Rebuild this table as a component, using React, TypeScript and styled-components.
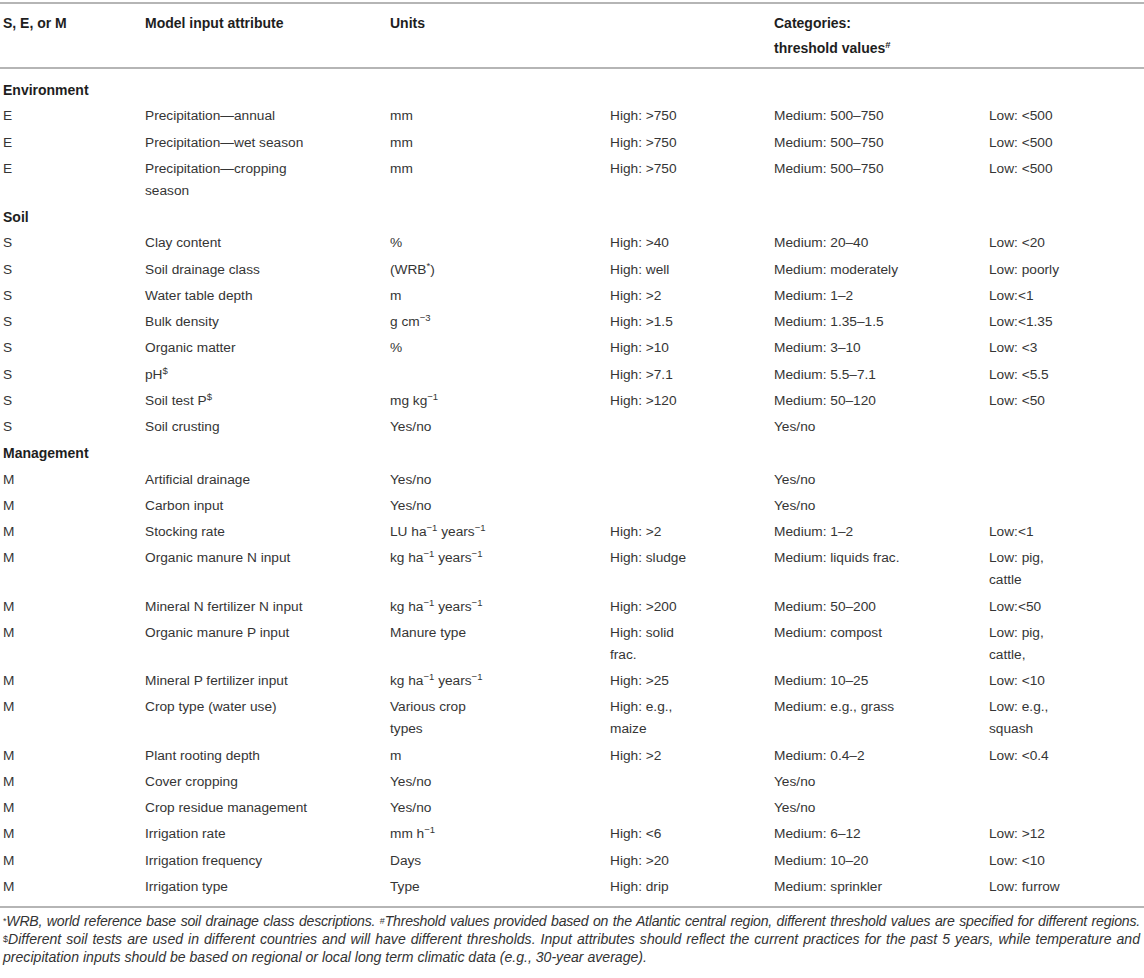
import React from 'react';
import styled, { createGlobalStyle } from 'styled-components';

const GlobalStyle = createGlobalStyle`
  html, body {
    margin: 0;
    padding: 0;
    background: #ffffff;
  }
  body {
    font-family: 'Liberation Sans', Arial, Helvetica, sans-serif;
    color: #333333;
  }
`;

const Page = styled.div`
  width: 1144px;
  padding-top: 2px;
`;

const Table = styled.table`
  width: 1144px;
  border-collapse: collapse;
  table-layout: fixed;
  border-top: 2px solid #b5b5b5;
  font-size: 13.7px;
`;

const HeadRow = styled.tr`
  border-bottom: 2px solid #b5b5b5;
`;

const HeadCell = styled.th<{ $pr: number }>`
  text-align: left;
  vertical-align: top;
  font-weight: 700;
  font-size: 14px;
  color: #1e1e1e;
  line-height: 25px;
  padding: 7px ${p => p.$pr}px 6px 3px;
`;

const Row = styled.tr`
  &:first-child td {
    padding-top: 10px;
  }
  &:last-child td {
    padding-bottom: 8px;
  }
`;

const Cell = styled.td<{ $pr: number }>`
  vertical-align: top;
  line-height: 22px;
  padding: 2px ${p => p.$pr}px 2.26px 3px;
  color: #353535;
`;

const SectionCell = styled.td`
  font-weight: 700;
  font-size: 14px;
  color: #1e1e1e;
  line-height: 22px;
  padding: 2px 0 2.26px 3px;
`;

const Sup = styled.sup`
  font-size: 9.5px;
  line-height: 0;
  vertical-align: 5px;
`;

const Notes = styled.div`
  border-top: 2px solid #b5b5b5;
  padding: 4px 4px 0 3px;
  font-style: italic;
  font-size: 14.1px;
  line-height: 18px;
  color: #333333;
`;

// the printed footnotes are justified line by line, as in the source layout
const NoteLine = styled.p<{ $stretch?: boolean; $tight?: boolean }>`
  margin: 0;
  text-align: justify;
  text-align-last: ${p => (p.$stretch ? 'justify' : 'auto')};
  letter-spacing: ${p => (p.$tight ? '-0.22px' : '0')};
  white-space: nowrap;
`;

const NoteMark = styled.sup`
  font-size: 9px;
  line-height: 0;
  vertical-align: 2px;
  font-style: normal;
`;

// column widths and right padding (the original keeps each column narrow)
const cols = [
  { w: 142, pr: 4 },
  { w: 245, pr: 62 },
  { w: 220, pr: 112 },
  { w: 164, pr: 74 },
  { w: 215, pr: 20 },
  { w: 158, pr: 72 },
];

type Cells = [React.ReactNode, React.ReactNode, React.ReactNode, React.ReactNode, React.ReactNode, React.ReactNode];
type Line = { section: string } | { cells: Cells };

const minus = '\u22121';

const lines: Line[] = [
  { section: 'Environment' },
  { cells: ['E', 'Precipitation\u2014annual', 'mm', 'High: >750', 'Medium: 500\u2013750', 'Low: <500'] },
  { cells: ['E', 'Precipitation\u2014wet season', 'mm', 'High: >750', 'Medium: 500\u2013750', 'Low: <500'] },
  { cells: ['E', 'Precipitation\u2014cropping season', 'mm', 'High: >750', 'Medium: 500\u2013750', 'Low: <500'] },
  { section: 'Soil' },
  { cells: ['S', 'Clay content', '%', 'High: >40', 'Medium: 20\u201340', 'Low: <20'] },
  { cells: ['S', 'Soil drainage class', <>(WRB<Sup>*</Sup>)</>, 'High: well', 'Medium: moderately', 'Low: poorly'] },
  { cells: ['S', 'Water table depth', 'm', 'High: >2', 'Medium: 1\u20132', 'Low:<1'] },
  { cells: ['S', 'Bulk density', <>g cm<Sup>{'\u22123'}</Sup></>, 'High: >1.5', 'Medium: 1.35\u20131.5', 'Low:<1.35'] },
  { cells: ['S', 'Organic matter', '%', 'High: >10', 'Medium: 3\u201310', 'Low: <3'] },
  { cells: ['S', <>pH<Sup>$</Sup></>, '', 'High: >7.1', 'Medium: 5.5\u20137.1', 'Low: <5.5'] },
  { cells: ['S', <>Soil test P<Sup>$</Sup></>, <>mg kg<Sup>{minus}</Sup></>, 'High: >120', 'Medium: 50\u2013120', 'Low: <50'] },
  { cells: ['S', 'Soil crusting', 'Yes/no', '', 'Yes/no', ''] },
  { section: 'Management' },
  { cells: ['M', 'Artificial drainage', 'Yes/no', '', 'Yes/no', ''] },
  { cells: ['M', 'Carbon input', 'Yes/no', '', 'Yes/no', ''] },
  { cells: ['M', 'Stocking rate', <>LU ha<Sup>{minus}</Sup> years<Sup>{minus}</Sup></>, 'High: >2', 'Medium: 1\u20132', 'Low:<1'] },
  { cells: ['M', 'Organic manure N input', <>kg ha<Sup>{minus}</Sup> years<Sup>{minus}</Sup></>, 'High: sludge', 'Medium: liquids frac.', 'Low: pig, cattle'] },
  { cells: ['M', 'Mineral N fertilizer N input', <>kg ha<Sup>{minus}</Sup> years<Sup>{minus}</Sup></>, 'High: >200', 'Medium: 50\u2013200', 'Low:<50'] },
  { cells: ['M', 'Organic manure P input', 'Manure type', 'High: solid frac.', 'Medium: compost', 'Low: pig, cattle,'] },
  { cells: ['M', 'Mineral P fertilizer input', <>kg ha<Sup>{minus}</Sup> years<Sup>{minus}</Sup></>, 'High: >25', 'Medium: 10\u201325', 'Low: <10'] },
  { cells: ['M', 'Crop type (water use)', 'Various crop types', 'High: e.g., maize', 'Medium: e.g., grass', 'Low: e.g., squash'] },
  { cells: ['M', 'Plant rooting depth', 'm', 'High: >2', 'Medium: 0.4\u20132', 'Low: <0.4'] },
  { cells: ['M', 'Cover cropping', 'Yes/no', '', 'Yes/no', ''] },
  { cells: ['M', 'Crop residue management', 'Yes/no', '', 'Yes/no', ''] },
  { cells: ['M', 'Irrigation rate', <>mm h<Sup>{minus}</Sup></>, 'High: <6', 'Medium: 6\u201312', 'Low: >12'] },
  { cells: ['M', 'Irrigation frequency', 'Days', 'High: >20', 'Medium: 10\u201320', 'Low: <10'] },
  { cells: ['M', 'Irrigation type', 'Type', 'High: drip', 'Medium: sprinkler', 'Low: furrow'] },
];

const headers: React.ReactNode[] = [
  'S, E, or M',
  'Model input attribute',
  'Units',
  '',
  <>Categories:<br />threshold values<Sup>#</Sup></>,
  '',
];

const App: React.FC = () => {
  return (
    <Page>
      <GlobalStyle />
      <Table>
        <colgroup>
          {cols.map((c, i) => (
            <col key={i} style={{ width: c.w }} />
          ))}
        </colgroup>
        <thead>
          <HeadRow>
            {headers.map((h, i) => (
              <HeadCell key={i} $pr={cols[i].pr}>{h}</HeadCell>
            ))}
          </HeadRow>
        </thead>
        <tbody>
          {lines.map((line, i) =>
            'section' in line ? (
              <Row key={i}>
                <SectionCell colSpan={6}>{line.section}</SectionCell>
              </Row>
            ) : (
              <Row key={i}>
                {line.cells.map((c, j) => (
                  <Cell key={j} $pr={cols[j].pr}>{c}</Cell>
                ))}
              </Row>
            )
          )}
        </tbody>
      </Table>
      <Notes>
        <NoteLine $stretch $tight>
          <NoteMark>*</NoteMark>WRB, world reference base soil drainage class descriptions. <NoteMark>#</NoteMark>Threshold values provided based on the Atlantic central region, different threshold values are specified for different regions.
        </NoteLine>
        <NoteLine $stretch>
          <NoteMark>$</NoteMark>Different soil tests are used in different countries and will have different thresholds. Input attributes should reflect the current practices for the past 5 years, while temperature and
        </NoteLine>
        <NoteLine>
          precipitation inputs should be based on regional or local long term climatic data (e.g., 30-year average).
        </NoteLine>
      </Notes>
    </Page>
  );
};

export default App;
